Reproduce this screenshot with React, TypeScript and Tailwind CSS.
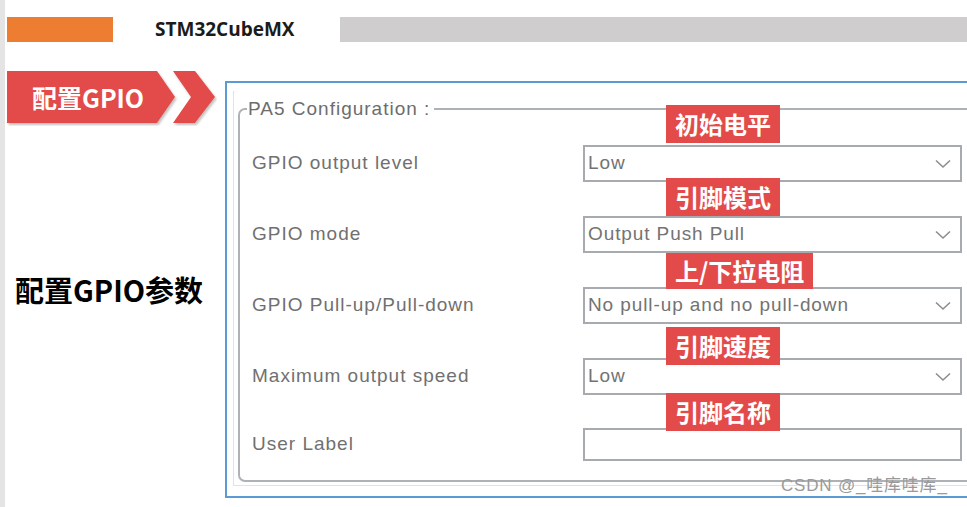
import React from 'react';

const rows = [
  { label: 'GPIO output level', value: 'Low', select: true },
  { label: 'GPIO mode', value: 'Output Push Pull', select: true },
  { label: 'GPIO Pull-up/Pull-down', value: 'No pull-up and no pull-down', select: true },
  { label: 'Maximum output speed', value: 'Low', select: true },
  { label: 'User Label', value: '', select: false },
];

const notes = [
  { text: '初始电平', top: 105, height: 38 },
  { text: '引脚模式', top: 178, height: 38 },
  { text: '上/下拉电阻', top: 253, height: 36 },
  { text: '引脚速度', top: 327, height: 38 },
  { text: '引脚名称', top: 393, height: 38 },
];

const cjk = { fontFamily: '"Noto Sans CJK SC", "Noto Sans", sans-serif' };
const ui = { fontFamily: '"Liberation Sans", Arial, sans-serif' };

function Chevron() {
  return (
    <svg width="16" height="10" viewBox="0 0 16 10" className="shrink-0">
      <path d="M1 1.5 L8 8 L15 1.5" fill="none" stroke="#8a8e92" strokeWidth="1.6" />
    </svg>
  );
}

function Row(props: { label: string; value: string; select: boolean; last?: boolean }) {
  return (
    <div className={`flex items-center ${props.last ? 'h-[64px]' : 'h-[71px]'}`}>
      <div className="w-[331px] text-[19px] text-[#707070] tracking-[1px]" style={ui}>
        {props.label}
      </div>
      <div
        className={`w-[379px] ${props.select ? 'h-[37px]' : 'h-[33px]'} border-2 border-[#a7abaf] bg-white flex items-center justify-between pl-[3px] pr-[9px]`}
      >
        <span className="text-[19px] text-[#737373] tracking-[0.9px]" style={ui}>{props.value}</span>
        {props.select && <Chevron />}
      </div>
    </div>
  );
}

export default function App() {
  return (
    <div className="relative w-[967px] h-[507px] overflow-hidden bg-white border-l-[5px] border-[#e4e4e4]">
      {/* header */}
      <div className="flex items-center h-[25px] mt-[17px] ml-[2px]">
        <div className="w-[106px] h-full bg-[#ed7d31]" />
        <div className="w-[227px] pl-[42px] text-[19px] font-bold text-[#1b1b1b]" style={{ fontFamily: '"Open Sans", sans-serif' }}>
          STM32CubeMX
        </div>
        <div className="flex-1 h-full bg-[#cfcdce]" />
      </div>

      <div className="flex mt-[29px]">
        {/* left column */}
        <div className="w-[220px] shrink-0 flex flex-col">
          <div className="relative ml-[2px] w-[210px] h-[53px]">
            <svg width="210" height="55" viewBox="0 0 210 55" className="absolute inset-0">
              <defs>
                <filter id="sh" x="-5%" y="-5%" width="115%" height="125%">
                  <feDropShadow dx="1.5" dy="2" stdDeviation="1.2" floodColor="#000" floodOpacity="0.25" />
                </filter>
              </defs>
              <g filter="url(#sh)" fill="#e24b4a">
                <polygon points="0,0 150,0 168,26 150,52 0,52" />
                <polygon points="166,0 188,0 208,26 188,52 166,52 184,26" />
              </g>
            </svg>
            <div className="relative h-full flex items-center pl-[25px] text-white text-[25px] font-bold" style={cjk}>
              配置GPIO
            </div>
          </div>
          <div className="mt-[151px] ml-[10px] text-[29px] font-bold text-black leading-none" style={cjk}>
            配置GPIO参数
          </div>
        </div>

        {/* config panel */}
        <div className="mt-[10px] w-[800px] h-[417px] shrink-0 border-l-2 border-t-2 border-b-2 border-[#5b9bd5]">
          <div className="ml-[6px] mt-[8px] pt-[8px] h-[395px] border-l border-b border-[#e2e2e2]">
            <fieldset className="ml-[4px] w-[780px] h-[383px] border-2 border-[#aeb2b6] rounded-[7px] pl-[12px] pt-[9px]">
              <legend className="ml-[-5px] pl-[1px] pr-[4px] text-[19px] text-[#6d6d6d] tracking-[1px] leading-[20px]" style={ui}>
                PA5 Configuration :
              </legend>
              {rows.map((r, i) => (
                <Row key={i} label={r.label} value={r.value} select={r.select} last={i === rows.length - 1} />
              ))}
            </fieldset>
          </div>
        </div>
      </div>

      {/* annotations */}
      {notes.map((n, i) => (
        <div
          key={i}
          className="absolute left-[661px] bg-[#e24b4a] text-white text-[24px] font-bold flex items-center px-[9px] leading-none"
          style={{ ...cjk, top: n.top, height: n.height }}
        >
          {n.text}
        </div>
      ))}

      <div className="absolute left-[776px] top-[477px] text-[17px] tracking-[0.8px] text-[#9a9a9a] leading-none" style={{ fontFamily: '"Liberation Sans", "Noto Sans CJK SC", sans-serif' }}>
        CSDN @_哇库哇库_
      </div>
    </div>
  );
}
